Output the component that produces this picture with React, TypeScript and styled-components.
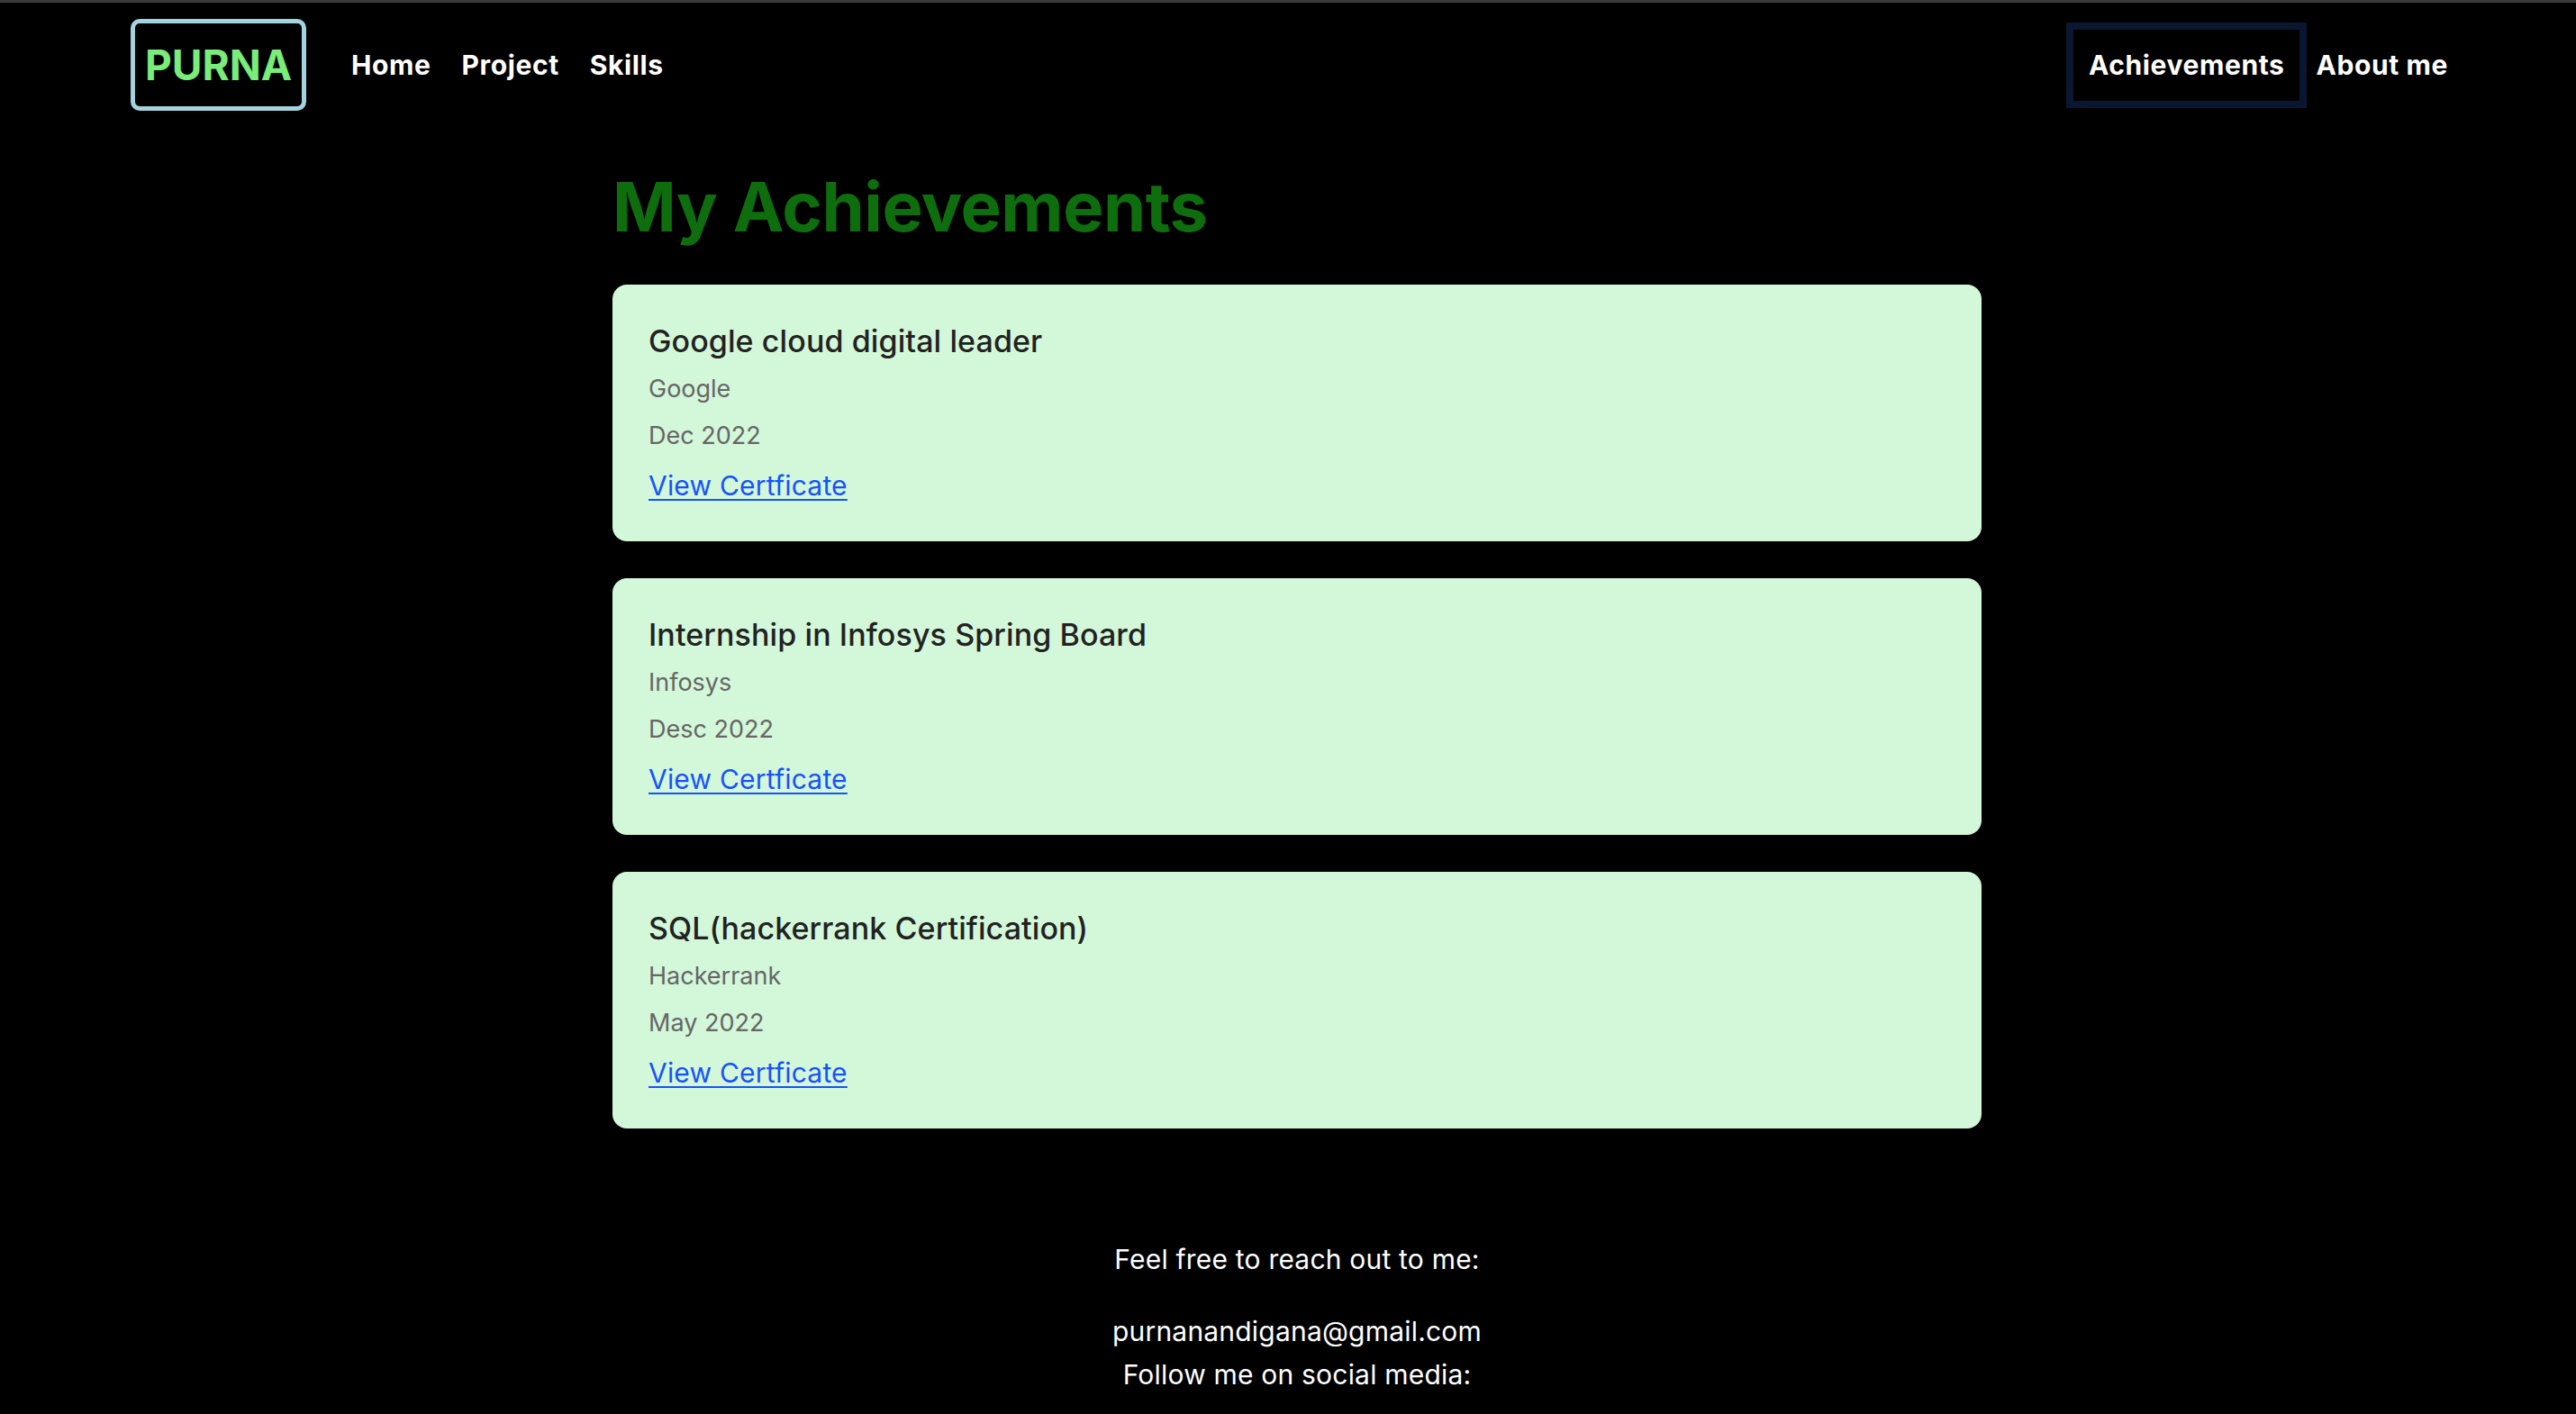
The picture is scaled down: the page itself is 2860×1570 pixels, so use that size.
import React from "react";
import styled, { createGlobalStyle } from "styled-components";

const GlobalStyle = createGlobalStyle`
  html, body {
    margin: 0;
    padding: 0;
    background: #000000;
  }
  body {
    font-family: Inter, "Noto Sans", "Liberation Sans", sans-serif;
    color: #ffffff;
  }
  * { box-sizing: border-box; }
`;

const Page = styled.div`
  min-height: 1570px;
  border-top: 3px solid #3c3c3e;
  padding-left: 20px;
  background: #000000;
`;

const NavBar = styled.nav`
  display: flex;
  align-items: center;
  justify-content: space-between;
  padding: 18px 142px 0 125px;
`;

const NavGroup = styled.div<{ $gap: number }>`
  display: flex;
  align-items: center;
  gap: ${(p) => p.$gap}px;
`;

const Logo = styled.div`
  display: flex;
  align-items: center;
  height: 102px;
  padding: 0 11px;
  margin-right: 16px;
  border: 5px solid #a4d3e0;
  border-radius: 10px;
  color: #79ec79;
  font-size: 46px;
  font-weight: 700;
`;

const NavLink = styled.a<{ $active?: boolean }>`
  display: flex;
  align-items: center;
  height: ${(p) => (p.$active ? "95px" : "auto")};
  padding: ${(p) => (p.$active ? "0 17px" : "0")};
  border: ${(p) => (p.$active ? "8px solid #0b1630" : "none")};
  color: #ffffff;
  font-size: 30px;
  font-weight: 700;
  letter-spacing: 0.6px;
  text-decoration: none;
  cursor: pointer;
`;

const Main = styled.main`
  width: 1520px;
  margin: 0 auto;
`;

const Heading = styled.h1`
  margin: 61px 0 41px;
  font-size: 76px;
  line-height: 91px;
  font-weight: 700;
  letter-spacing: -0.5px;
  color: #0e6e0e;
`;

const CardList = styled.div`
  display: flex;
  flex-direction: column;
  gap: 41px;
`;

const Card = styled.section`
  height: 285px;
  padding: 42px 40px 0;
  background: #d3f7d9;
  border-radius: 16px;
`;

const CardTitle = styled.h3`
  margin: 0;
  font-size: 34px;
  line-height: 41px;
  font-weight: 500;
  letter-spacing: 0.1px;
  color: #222222;
`;

const CardMeta = styled.p<{ $space: number }>`
  margin: ${(p) => p.$space}px 0 0;
  font-size: 27px;
  line-height: 33px;
  font-weight: 400;
  color: #666666;
`;

const CertLink = styled.a`
  display: inline-block;
  margin-top: 21px;
  font-size: 30px;
  line-height: 36px;
  letter-spacing: 0.2px;
  color: #1553ff;
  text-decoration: underline;
  text-decoration-thickness: 2px;
  text-underline-offset: 4px;
  cursor: pointer;
`;

const Footer = styled.footer`
  display: flex;
  flex-direction: column;
  align-items: center;
  padding-top: 127px;
  color: #ffffff;
  font-size: 30px;
  line-height: 36px;
  letter-spacing: 0.2px;
`;

const FooterLine = styled.p<{ $space: number }>`
  margin: ${(p) => p.$space}px 0 0;
`;

type Achievement = {
  title: string;
  issuer: string;
  date: string;
};

const achievements: Achievement[] = [
  { title: "Google cloud digital leader", issuer: "Google", date: "Dec 2022" },
  { title: "Internship in Infosys Spring Board", issuer: "Infosys", date: "Desc 2022" },
  { title: "SQL(hackerrank Certification)", issuer: "Hackerrank", date: "May 2022" },
];

export default function App() {
  return (
    <>
      <GlobalStyle />
      <Page>
        <NavBar>
          <NavGroup $gap={34}>
            <Logo>PURNA</Logo>
            <NavLink>Home</NavLink>
            <NavLink>Project</NavLink>
            <NavLink>Skills</NavLink>
          </NavGroup>
          <NavGroup $gap={10}>
            <NavLink $active>Achievements</NavLink>
            <NavLink>About me</NavLink>
          </NavGroup>
        </NavBar>
        <Main>
          <Heading>My Achievements</Heading>
          <CardList>
            {achievements.map((a) => (
              <Card key={a.title}>
                <CardTitle>{a.title}</CardTitle>
                <CardMeta $space={16}>{a.issuer}</CardMeta>
                <CardMeta $space={19}>{a.date}</CardMeta>
                <CertLink>View Certficate</CertLink>
              </Card>
            ))}
          </CardList>
        </Main>
        <Footer>
          <FooterLine $space={0}>Feel free to reach out to me:</FooterLine>
          <FooterLine $space={44}>purnanandigana@gmail.com</FooterLine>
          <FooterLine $space={12}>Follow me on social media:</FooterLine>
        </Footer>
      </Page>
    </>
  );
}
